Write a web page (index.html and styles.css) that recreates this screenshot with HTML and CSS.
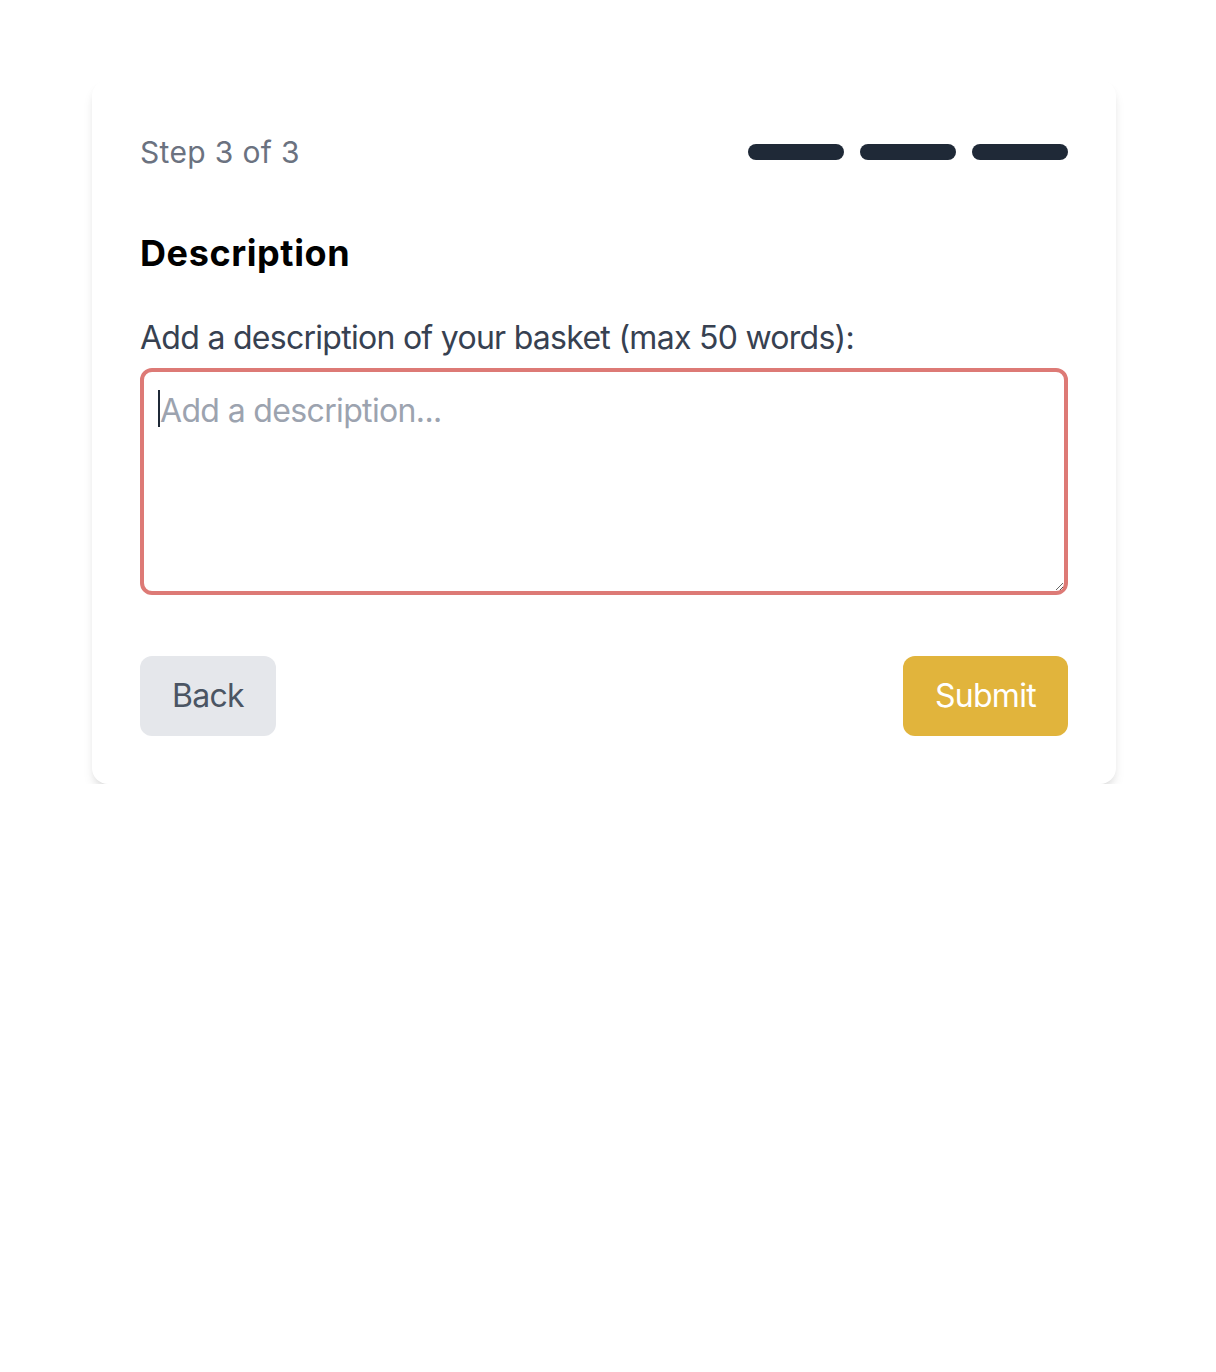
FILE: index.html
```html
<!DOCTYPE html>
<html lang="en">
<head>
<meta charset="utf-8">
<title>Step 3 of 3</title>
<link rel="stylesheet" href="styles.css">
</head>
<body>
<div class="card">
  <div class="step-row">
    <span class="step-text">Step 3 of 3</span>
    <div class="bars">
      <span class="bar"></span>
      <span class="bar"></span>
      <span class="bar"></span>
    </div>
  </div>
  <h2 class="title">Description</h2>
  <label class="label" for="desc">Add a description of your basket (max 50 words):</label>
  <div class="field">
    <textarea id="desc" class="textarea" placeholder="Add a description..."></textarea>
    <span class="caret"></span>
  </div>
  <div class="actions">
    <button class="btn btn-back">Back</button>
    <button class="btn btn-submit">Submit</button>
  </div>
</div>
</body>
</html>
```

FILE: styles.css
```css
* { box-sizing: border-box; }
html, body { margin: 0; padding: 0; background: #fff; }
body {
  font-family: Inter, "Noto Sans", sans-serif;
  color: #000;
}
.card {
  width: 1024px;
  margin: 80px 0 0 92px;
  padding: 48px;
  background: #fff;
  border-radius: 16px;
  box-shadow: 0 8px 12px -2px rgba(0,0,0,0.10), 0 4px 8px -4px rgba(0,0,0,0.10);
}
.step-row {
  display: flex;
  justify-content: space-between;
  align-items: center;
  height: 48px;
}
.step-text {
  font-size: 30px;
  line-height: 40px;
  letter-spacing: 0.35px;
  color: #6b7280;
}
.bars {
  display: flex;
  gap: 16px;
}
.bar {
  display: block;
  width: 96px;
  height: 16px;
  border-radius: 9999px;
  background: #1f2937;
}
.title {
  margin: 49px 0 0;
  font-size: 36px;
  line-height: 56px;
  font-weight: 700;
  letter-spacing: 0.6px;
  color: #000;
}
.label {
  display: block;
  margin-top: 33px;
  font-size: 32px;
  line-height: 48px;
  letter-spacing: -0.72px;
  color: #374151;
}
.field {
  position: relative;
  margin-top: 6px;
}
.textarea {
  display: block;
  width: 100%;
  height: 227px;
  padding: 15px 16px 12px 16px;
  border: 4px solid #dd7a76;
  border-radius: 12px;
  font-family: Inter, "Noto Sans", sans-serif;
  font-size: 32px;
  line-height: 48px;
  letter-spacing: -0.65px;
  color: #111827;
  outline: none;
  resize: vertical;
  caret-color: transparent;
}
.textarea::placeholder { color: #9ca3af; }
.caret {
  position: absolute;
  left: 18px;
  top: 22px;
  width: 2px;
  height: 37px;
  background: #1f2937;
}
.actions {
  display: flex;
  justify-content: space-between;
  margin-top: 61px;
}
.btn {
  border: none;
  padding: 16px 32px;
  font-family: Inter, "Noto Sans", sans-serif;
  font-size: 32px;
  line-height: 48px;
  letter-spacing: -0.7px;
  border-radius: 12px;
  cursor: pointer;
}
.btn-back { background: #e5e7eb; color: #4b5563; }
.btn-submit { background: #e1b43c; color: #fff; }
```
